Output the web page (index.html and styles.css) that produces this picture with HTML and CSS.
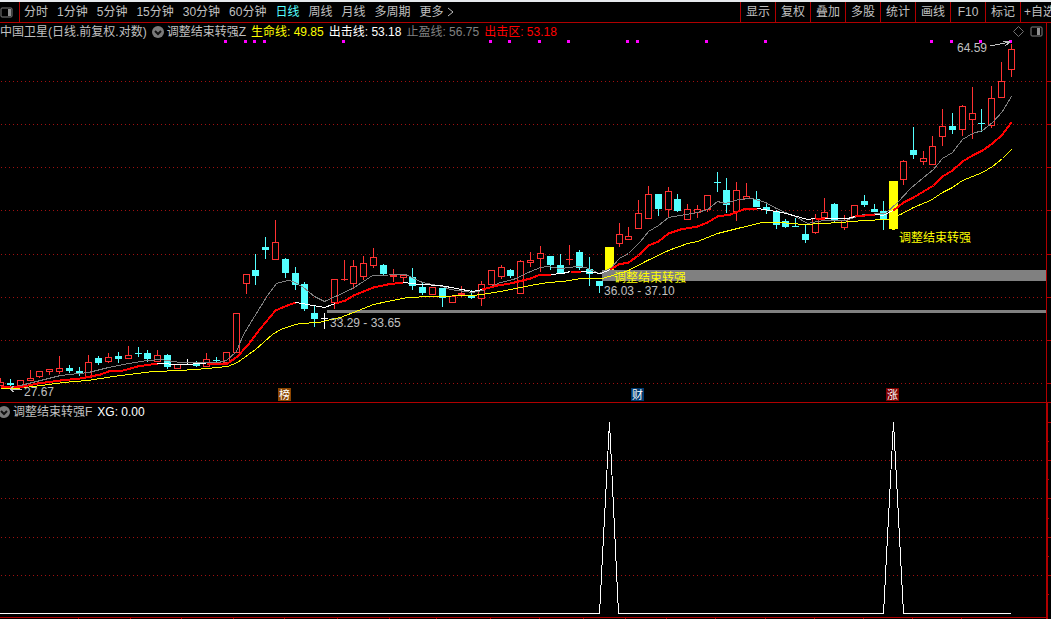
FILE: index.html
```
<!DOCTYPE html>
<html lang="zh-CN">

<head>
    <meta charset="UTF-8">
    <meta name="viewport" content="width=device-width, initial-scale=1.0">
    <title>中国卫星 日线</title>
    <link rel="stylesheet" href="styles.css">
</head>

<body>
    <nav class="toolbar">
        <button class="side-btn" aria-label="侧栏">
            <svg width="13" height="11" viewBox="0 0 13 11">
                <rect x="1" y="1" width="11" height="9" rx="1" fill="none" stroke="#808080" />
                <rect x="8" y="2" width="3" height="7" fill="#909090" />
            </svg>
        </button>
        <div class="periods">
            <button>分时</button>
            <button>1分钟</button>
            <button>5分钟</button>
            <button>15分钟</button>
            <button>30分钟</button>
            <button>60分钟</button>
            <button class="active">日线</button>
            <button>周线</button>
            <button>月线</button>
            <button>多周期</button>
            <button class="more">更多<svg width="7" height="10" viewBox="0 0 7 10">
                    <path d="M1 1L6 5L1 9" fill="none" stroke="#c0c0c0" />
                </svg></button>
        </div>
        <div class="tools">
            <button>显示</button>
            <button>复权</button>
            <button>叠加</button>
            <button>多股</button>
            <button>统计</button>
            <button>画线</button>
            <button>F10</button>
            <button>标记</button>
            <button class="last">+自选</button>
        </div>
    </nav>

    <section class="panel main">
        <div class="legend">
            <span>中国卫星(日线.前复权.对数)</span>
            <span class="title">
                <button aria-label="指标菜单">
                    <svg width="12" height="12" viewBox="0 0 12 12">
                        <circle cx="6" cy="6" r="6" fill="#7a7a7a" />
                        <path d="M3 5L6 8L9 5" fill="none" stroke="#111" stroke-width="2" />
                    </svg>
                </button>
                <span>调整结束转强Z</span>
            </span>
            <span class="yellow">生命线: 49.85</span>
            <span class="white">出击线: 53.18</span>
            <span class="gray">止盈线: 56.75</span>
            <span class="red">出击区: 53.18</span>
            <span class="corner">
                <button aria-label="标记点">
                    <svg width="11" height="11" viewBox="0 0 11 11">
                        <path d="M5.5 .5L10.500 5.500L5.500 10.500L.5 5.500Z" fill="none" stroke="#707070" />
                    </svg>
                </button>
                <button aria-label="右侧栏">
                    <svg width="13" height="11" viewBox="0 0 13 11">
                        <rect x="1" y="1" width="11" height="9" rx="1" fill="none" stroke="#808080" />
                        <rect x="7" y="2" width="3" height="7" fill="#909090" />
                    </svg>
                </button>
            </span>
        </div>
        <svg class="chart" id="kline" viewBox="0 40 1051 362">
            <g id="grid"></g>
            <g id="candles"></g>
            <rect x="602" y="270" width="444" height="11" fill="#808080" />
            <rect x="327" y="310" width="719" height="3" fill="#808080" />
            <g id="lines"></g>
            <g id="dots"></g>
            <path class="arrow" d="M22 389H10M14 386L10 389L14 392M990 46L1010 42M1003 41L1010 42L1005 46" />
            <text x="24" y="396">27.67</text>
            <text x="330" y="327">33.29 - 33.65</text>
            <text x="604" y="295">36.03 - 37.10</text>
            <text x="957" y="52">64.59</text>
            <text class="signal" x="614" y="282">调整结束转强</text>
            <text class="signal" x="899" y="242">调整结束转强</text>
            <rect x="278" y="388" width="13" height="13" fill="#8b4500" />
            <text class="badge" x="279" y="399">榜</text>
            <rect x="631" y="388" width="13" height="13" fill="#003a70" />
            <text class="badge" x="632" y="399">财</text>
            <rect x="886" y="388" width="13" height="13" fill="#800000" />
            <text class="badge" x="887" y="399">涨</text>
        </svg>
    </section>

    <section class="panel sub">
        <div class="legend">
            <span class="title">
                <button aria-label="指标菜单">
                    <svg width="12" height="12" viewBox="0 0 12 12">
                        <circle cx="6" cy="6" r="6" fill="#7a7a7a" />
                        <path d="M3 5L6 8L9 5" fill="none" stroke="#111" stroke-width="2" />
                    </svg>
                </button>
                <span>调整结束转强F</span>
            </span>
            <span class="white">XG: 0.00</span>
        </div>
        <svg class="chart" id="xg" viewBox="0 420 1051 199">
            <g id="grid2"></g>
            <path class="xg-line" d="M0 613.5H599.5L609.5 422L618.5 613.5H883.500L893.500 422L903.500 613.500H1011" />
        </svg>
    </section>

    <script>
        var $ = function (id) {
            return document.getElementById(id);
        }
        //往svg里添加一个元素
        function add(parent, tag, attrs) {
            var el = document.createElementNS('http://www.w3.org/2000/svg', tag);
            for (var k in attrs) {
                el.setAttribute(k, attrs[k]);
            }
            parent.appendChild(el);
        }
        function rect(parent, x, y, w, h, cls) {
            add(parent, 'rect', { x: x, y: y, width: w, height: h, 'class': cls });
        }

        //K线: x, 类型(u涨 d跌 w平 s信号), 最高, 实体上, 实体下, 最低
        var bars = [
            [0, 'u', 378, 382, 386, 386], [10, 'd', 379, 383, 385, 387], [20, 'u', 380, 380, 386, 386],
            [30, 'u', 370, 378, 381, 381], [39, 'u', 371, 371, 377, 378], [49, 'u', 369, 369, 372, 375],
            [59, 'u', 356, 368, 372, 374], [69, 'd', 365, 368, 371, 373], [79, 'd', 367, 371, 374, 376],
            [88, 'u', 355, 362, 378, 378], [98, 'd', 356, 358, 363, 365], [108, 'u', 353, 357, 362, 363],
            [118, 'd', 352, 356, 359, 363], [128, 'u', 346, 355, 359, 359], [138, 'd', 347, 353, 354, 357],
            [147, 'd', 350, 353, 359, 362], [157, 'u', 350, 355, 362, 362], [167, 'd', 354, 355, 367, 369],
            [177, 'u', 364, 364, 369, 369], [187, 'w', 359, 362, 363, 364], [196, 'd', 361, 362, 366, 367],
            [206, 'u', 353, 359, 367, 367], [216, 'd', 357, 360, 361, 362], [226, 'u', 352, 352, 363, 365],
            [236, 'u', 313, 313, 353, 353], [246, 'u', 274, 274, 284, 294], [255, 'd', 254, 270, 276, 285],
            [265, 'd', 237, 247, 250, 259], [275, 'u', 220, 242, 260, 260], [285, 'd', 258, 259, 273, 278],
            [295, 'd', 267, 273, 285, 290], [304, 'd', 282, 284, 309, 311], [314, 'd', 306, 313, 319, 327],
            [324, 'w', 313, 318, 319, 329], [334, 'u', 279, 279, 303, 309], [344, 'u', 260, 279, 280, 281],
            [353, 'u', 260, 266, 284, 289], [363, 'u', 256, 263, 277, 280], [373, 'u', 248, 257, 266, 268],
            [383, 'd', 264, 265, 274, 275], [393, 'u', 269, 275, 277, 282], [403, 'u', 275, 275, 278, 282],
            [412, 'd', 268, 277, 286, 290], [422, 'd', 282, 287, 293, 295], [432, 'u', 287, 287, 295, 295],
            [442, 'd', 288, 288, 298, 307], [452, 'u', 296, 296, 303, 303], [461, 'u', 286, 293, 295, 297],
            [471, 'd', 290, 295, 298, 299], [481, 'u', 281, 284, 299, 306], [491, 'u', 270, 270, 285, 285],
            [501, 'u', 265, 267, 277, 279], [510, 'd', 269, 270, 276, 278], [520, 'u', 260, 261, 294, 294],
            [530, 'u', 252, 260, 263, 267], [540, 'u', 246, 253, 259, 272], [550, 'd', 256, 256, 265, 270],
            [560, 'd', 254, 265, 273, 273], [569, 'u', 245, 259, 260, 265], [579, 'd', 250, 252, 268, 270],
            [589, 'd', 257, 269, 274, 286], [599, 'd', 281, 281, 286, 293], [609, 's', 247, 247, 271, 271],
            [619, 'u', 223, 234, 244, 247], [628, 'u', 227, 236, 240, 240], [638, 'u', 200, 213, 229, 229],
            [648, 'u', 186, 194, 219, 219], [658, 'd', 194, 194, 209, 216], [668, 'u', 187, 191, 210, 217],
            [677, 'd', 194, 199, 211, 212], [687, 'u', 204, 209, 220, 220], [697, 'u', 205, 209, 213, 218],
            [707, 'u', 195, 195, 210, 212], [717, 'd', 172, 182, 183, 192], [726, 'd', 178, 190, 205, 213],
            [736, 'u', 182, 190, 212, 221], [746, 'u', 183, 196, 199, 199], [756, 'd', 191, 199, 207, 207],
            [766, 'd', 203, 207, 210, 214], [776, 'd', 210, 211, 225, 229], [785, 'd', 219, 221, 227, 228],
            [795, 'd', 218, 226, 227, 227], [805, 'd', 225, 234, 240, 243], [815, 'u', 214, 218, 233, 234],
            [824, 'u', 198, 212, 218, 218], [834, 'd', 203, 204, 221, 223], [844, 'u', 215, 220, 228, 230],
            [854, 'u', 205, 205, 217, 217], [864, 'd', 195, 201, 205, 207], [874, 'd', 204, 209, 212, 212],
            [883, 'd', 201, 211, 220, 230], [893, 's', 181, 181, 229, 230], [903, 'u', 160, 161, 180, 185],
            [913, 'd', 127, 150, 155, 159], [923, 'u', 151, 158, 162, 165], [932, 'u', 136, 146, 165, 165],
            [942, 'u', 109, 126, 137, 146], [952, 'd', 113, 126, 130, 134], [962, 'u', 105, 106, 130, 136],
            [972, 'u', 87, 113, 120, 139], [981, 'd', 109, 123, 124, 132], [991, 'u', 86, 98, 126, 128],
            [1001, 'u', 62, 81, 98, 98], [1011, 'u', 44, 49, 70, 77]
        ];

        //止盈线
        var gray = '20,385 40,380 60,375 88,372 108,367 128,363 147,360 160,359 180,362 218,362 226,360 236,351 243,334 254,316 267,295 276,283 287,280 293,281 303,287 314,296 324,301 335,296 352,288 363,281 372,275 405,274 422,282 442,286 450,289 472,292 482,290 500,282 513,279 530,271 540,267 547,266 560,268 577,266 585,267 599,273 610,268 619,258 628,253 640,241 648,231 658,225 668,217 680,215 697,212 707,209 717,201 725,203 738,199 752,198 765,202 776,208 787,213 795,216 807,223 823,220 845,220 863,214 885,213 897,202 910,188 923,177 933,169 942,158 952,152 962,139 972,133 982,130 992,122 1002,111 1011,96';
        //生命线
        var yellow = '0,388 15,388 33,386 63,382 87,380 113,376 153,371 180,370 207,368 227,366 237,362 255,349 272,334 280,329 295,324 300,323 318,322 340,317 353,312 373,304 387,301 407,297 430,296 473,295 488,293 500,291 530,285 547,282 563,281 580,278 602,278 628,270 647,260 668,250 687,243 697,241 717,233 737,228 762,222 779,222 803,224 840,222 863,220 887,219 900,214 913,207 930,200 942,192 952,187 962,180 982,172 992,166 1002,158 1011,149';
        //出击线, 强势的几段加粗变红
        var white = [
            '157,363 180,364 206,363',
            '295,302 307,304 324,307 335,303',
            '403,282 420,284 440,285 472,291 482,289',
            '550,274 562,273 570,271',
            '580,271 592,272 600,273 610,269',
            '757,208 782,212 807,219 815,218',
            '824,218 847,218 855,216',
            '875,214 883,215 890,211 893,210'
        ];
        var red = [
            '0,386 23,386 37,383 60,380 80,378 100,374 108,371 123,370 137,366 157,363',
            '206,363 227,363 237,356 247,345 260,328 275,310 287,305 295,302',
            '335,303 345,300 353,295 373,287 387,284 403,282',
            '482,289 497,285 510,283 530,278 540,274 550,274',
            '570,271 580,271',
            '610,269 618,264 628,262 638,255 648,245 658,241 668,233 680,229 697,226 707,222 717,216 730,214 743,209 757,208',
            '815,218 824,218',
            '855,216 875,214',
            '893,210 903,202 913,197 923,191 933,185 942,176 952,170 962,161 972,155 982,150 992,143 1002,134 1011,122'
        ];
        var dots = [225, 245, 254, 264, 343, 490, 509, 539, 568, 627, 637, 706, 765, 931, 951, 980, 1010];
        var months = [78, 130, 181, 233, 284, 337, 389, 436, 490, 539, 583, 625, 666, 715, 765, 814, 863, 912, 961];

        function drawGrid(g, list) {
            list.forEach(function (y) {
                add(g, 'path', { d: 'M1 ' + (y + 0.5) + 'H1043', 'class': 'dotted' });
                rect(g, 1047, y, 4, 1, 'axis');
            });
        }
        function drawLine(points, cls) {
            add($('lines'), 'polyline', { points: points, 'class': cls, transform: 'translate(.5 .5)' });
        }

        drawGrid($('grid'), [81, 124, 167, 210, 254, 297, 340, 383]);
        rect($('grid'), 1046, 40, 1, 362, 'axis');
        bars.forEach(function (b) {
            var g = $('candles'), x = b[0], top = b[3], h = b[4] - b[3];
            if (b[1] == 's') {
                rect(g, x - 4, top, 9, h, 's');
                rect(g, x - 1, top, 3, b[5] - top, 's');
                return;
            }
            rect(g, x, b[2], 1, top - b[2], b[1]);
            rect(g, x, b[4], 1, b[5] - b[4], b[1]);
            if (b[1] == 'u' && h > 1) {
                add(g, 'rect', { x: x - 2.5, y: top + 0.5, width: 6, height: h - 1, 'class': 'hollow' });
            } else {
                rect(g, x - 3, top, 7, h, b[1]);
            }
        });
        drawLine(gray, 'ma-gray');
        drawLine(yellow, 'ma-yellow');
        white.forEach(function (p) { drawLine(p, 'ma-white'); });
        red.forEach(function (p) { drawLine(p, 'ma-red'); });
        dots.forEach(function (x) { rect($('dots'), x - 1, 40, 3, 3, 'dot'); });

        drawGrid($('grid2'), [460, 498, 537, 575]);
        rect($('grid2'), 1046, 420, 2, 199, 'axis');
        rect($('grid2'), 1048, 422, 3, 1, 'axis');
        [441, 479, 518, 556, 594].forEach(function (y) { rect($('grid2'), 1048, y, 1, 1, 'axis'); });
        rect($('grid2'), 0, 617, 1046, 1, 'axis');
        months.forEach(function (x) { rect($('grid2'), x, 618, 1, 1, 'axis'); });
    </script>
</body>

</html>
```
FILE: styles.css
```
* {
    box-sizing: border-box;
}

body {
    margin: 0;
    background-color: #000;
    color: #c0c0c0;
    font-family: "Liberation Sans", "Noto Sans CJK SC", sans-serif;
    font-size: 12px;
    line-height: 16px;
    overflow-x: hidden;
}

button {
    padding: 0;
    border: none;
    background: none;
    color: inherit;
    font: inherit;
    white-space: nowrap;
    cursor: pointer;
}

button svg {
    display: block;
}

.toolbar {
    display: flex;
    height: 23px;
    border-top: 2px solid #e6e9ec;
    border-bottom: 1px solid #b00000;
}

.side-btn {
    width: 20px;
    border-right: 1px solid #b00000;
}

.periods {
    display: flex;
    flex: 1;
    gap: 9px;
    padding-left: 4px;
}

.periods .active {
    color: #54ffff;
}

.more {
    display: flex;
    align-items: center;
    gap: 3px;
}

.tools {
    display: flex;
}

.tools button {
    width: 35px;
    border-left: 1px solid #b00000;
}

.tools .last {
    width: 31px;
    padding-left: 3px;
    text-align: left;
    overflow: hidden;
}

.legend {
    display: flex;
    align-items: center;
    gap: 5px;
    height: 17px;
    margin-right: 4px;
    border-right: 1px solid #b00000;
    white-space: nowrap;
}

.title {
    display: flex;
    align-items: center;
    gap: 3px;
}

.corner {
    display: flex;
    align-items: center;
    gap: 6px;
    margin-left: auto;
    padding-right: 3px;
}

.main {
    border-bottom: 1px solid #b00000;
}

.sub .legend {
    margin-right: 3px;
    border-right-width: 2px;
}

.sub .title {
    margin-left: -2px;
}

.yellow {
    color: #ffff00;
}

.white {
    color: #fff;
}

.gray {
    color: #808080;
}

.red {
    color: #ff0000;
}

.chart {
    display: block;
    width: 100%;
    height: auto;
    shape-rendering: crispEdges;
}

.chart text {
    fill: #c0c0c0;
}

.chart .signal {
    fill: #ffff00;
}

.chart .badge {
    fill: #fff;
    font-size: 11px;
}

.axis {
    fill: #b00000;
}

.dotted {
    stroke: #a01010;
    stroke-dasharray: 1 3;
}

.u {
    fill: #ff3232;
}

.hollow {
    fill: #000;
    stroke: #ff3232;
}

.d {
    fill: #54ffff;
}

.w {
    fill: #fff;
}

.s {
    fill: #ffff00;
}

.dot {
    fill: #ff00ff;
}

.ma-gray,
.ma-yellow,
.ma-white,
.ma-red,
.xg-line,
.arrow {
    fill: none;
    stroke: #808080;
    stroke-width: 1px;
}

.ma-yellow {
    stroke: #ffff00;
}

.ma-white,
.xg-line {
    stroke: #fff;
}

.ma-red {
    stroke: #ff0000;
    stroke-width: 2px;
}

.arrow {
    stroke: #c0c0c0;
}
```
